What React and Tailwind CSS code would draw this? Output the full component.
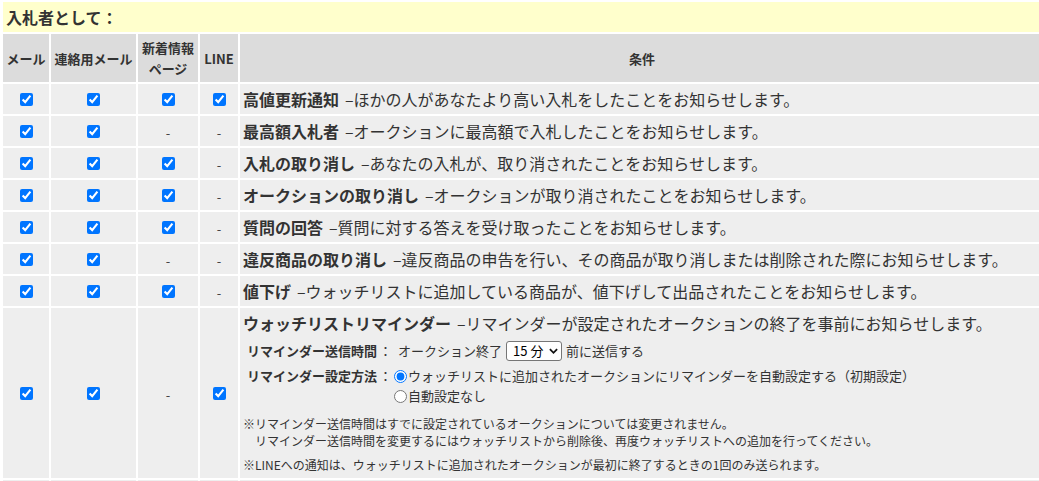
import React from "react";

const rows = [
  { news: true, line: true, title: "高値更新通知", desc: "ほかの人があなたより高い入札をしたことをお知らせします。" },
  { news: false, line: false, title: "最高額入札者", desc: "オークションに最高額で入札したことをお知らせします。" },
  { news: true, line: false, title: "入札の取り消し", desc: "あなたの入札が、取り消されたことをお知らせします。" },
  { news: true, line: false, title: "オークションの取り消し", desc: "オークションが取り消されたことをお知らせします。" },
  { news: true, line: false, title: "質問の回答", desc: "質問に対する答えを受け取ったことをお知らせします。" },
  { news: false, line: false, title: "違反商品の取り消し", desc: "違反商品の申告を行い、その商品が取り消しまたは削除された際にお知らせします。" },
  { news: true, line: false, title: "値下げ", desc: "ウォッチリストに追加している商品が、値下げして出品されたことをお知らせします。" },
];

const Check = () => (
  <input type="checkbox" defaultChecked className="mx-auto my-0 block h-[13px] w-[13px]" />
);

const Dash = () => <span className="text-[13px] text-[#444]">-</span>;

const Cell = ({ children, className = "" }) => (
  <td className={`bg-[#eeeeee] p-0 text-center align-middle ${className}`}>{children}</td>
);

const Th = ({ children, className = "" }) => (
  <th className={`bg-[#dcdcdc] p-0 text-center align-middle text-[13px] font-bold leading-[21px] ${className}`}>
    {children}
  </th>
);

const Title = ({ title, desc }) => (
  <>
    <span className="font-bold">{title}</span>
    <span className="ml-[6px]">–</span>
    {desc}
  </>
);

export default function App() {
  return (
    <div
      className="w-[1039px] overflow-x-hidden bg-white pt-[2px] text-[#333]"
      style={{ fontFamily: '"Noto Sans CJK JP", "Noto Sans", sans-serif' }}
    >
      <div className="ml-[3px] flex h-[30px] w-[1040px] items-center bg-[#ffffcc] pl-[3px] text-[16px] font-bold">
        入札者として：
      </div>
      <table className="ml-[1px] w-[1045px] table-fixed border-separate border-spacing-[2px]">
        <colgroup>
          <col className="w-[46px]" />
          <col className="w-[85px]" />
          <col className="w-[60px]" />
          <col className="w-[38px]" />
          <col />
        </colgroup>
        <thead>
          <tr className="h-[48px]">
            <Th>メール</Th>
            <Th>連絡用メール</Th>
            <Th>
              新着情報
              <br />
              ページ
            </Th>
            <Th>LINE</Th>
            <Th>条件</Th>
          </tr>
        </thead>
        <tbody>
          {rows.map((r) => (
            <tr key={r.title} className="h-[30px]">
              <Cell><Check /></Cell>
              <Cell><Check /></Cell>
              <Cell>{r.news ? <Check /> : <Dash />}</Cell>
              <Cell>{r.line ? <Check /> : <Dash />}</Cell>
              <Cell className="whitespace-nowrap pl-[3px] text-left text-[16px] leading-[20px]">
                <Title title={r.title} desc={r.desc} />
              </Cell>
            </tr>
          ))}
          <tr className="h-[170px]">
            <Cell><Check /></Cell>
            <Cell><Check /></Cell>
            <Cell><Dash /></Cell>
            <Cell><Check /></Cell>
            <Cell className="whitespace-nowrap pl-[3px] pt-[4px] text-left align-top">
              <div className="text-[16px] leading-[22px]">
                <Title
                  title="ウォッチリストリマインダー"
                  desc="リマインダーが設定されたオークションの終了を事前にお知らせします。"
                />
              </div>
              <div className="mt-[7px] flex items-center pl-[4px] text-[13px] leading-[20px]">
                <span className="font-bold">リマインダー送信時間</span>
                <span className="ml-[2px] mr-[6px]">：</span>
                <span>オークション終了</span>
                <span className="relative mx-[4px] inline-flex">
                  <select
                    defaultValue="15"
                    className="h-[20px] appearance-none rounded-[3px] border border-[#767676] bg-white pl-[6px] pr-[17px] text-[13px] leading-[18px] text-black"
                  >
                    <option value="15">15 分</option>
                    <option value="30">30 分</option>
                    <option value="60">60 分</option>
                  </select>
                  <svg
                    className="pointer-events-none absolute right-[4px] top-[6px] h-[8px] w-[9px]"
                    viewBox="0 0 10 8"
                    fill="none"
                    stroke="#111"
                    strokeWidth="2"
                  >
                    <path d="M1 2l4 4 4-4" />
                  </svg>
                </span>
                <span>前に送信する</span>
              </div>
              <div className="mt-[5px] flex pl-[4px] text-[13px] leading-[20px]">
                <span className="font-bold">リマインダー設定方法</span>
                <span className="ml-[2px] mr-[2px]">：</span>
                <div className="flex flex-col">
                  <label className="flex items-center">
                    <input type="radio" name="remind" defaultChecked className="m-0 mr-[1px] h-[13px] w-[13px]" />
                    ウォッチリストに追加されたオークションにリマインダーを自動設定する（初期設定）
                  </label>
                  <label className="flex items-center">
                    <input type="radio" name="remind" className="m-0 mr-[1px] h-[13px] w-[13px]" />
                    自動設定なし
                  </label>
                </div>
              </div>
              <div className="mt-[9px] text-[12px] leading-[17px]">
                ※リマインダー送信時間はすでに設定されているオークションについては変更されません。
                <br />
                <span className="pl-[12px]">リマインダー送信時間を変更するにはウォッチリストから削除後、再度ウォッチリストへの追加を行ってください。</span>
              </div>
              <div className="mt-[7px] text-[12px] leading-[17px]">
                ※LINEへの通知は、ウォッチリストに追加されたオークションが最初に終了するときの1回のみ送られます。
              </div>
            </Cell>
          </tr>
          <tr className="h-[30px]">
            <Cell />
            <Cell />
            <Cell />
            <Cell />
            <Cell />
          </tr>
        </tbody>
      </table>
    </div>
  );
}
